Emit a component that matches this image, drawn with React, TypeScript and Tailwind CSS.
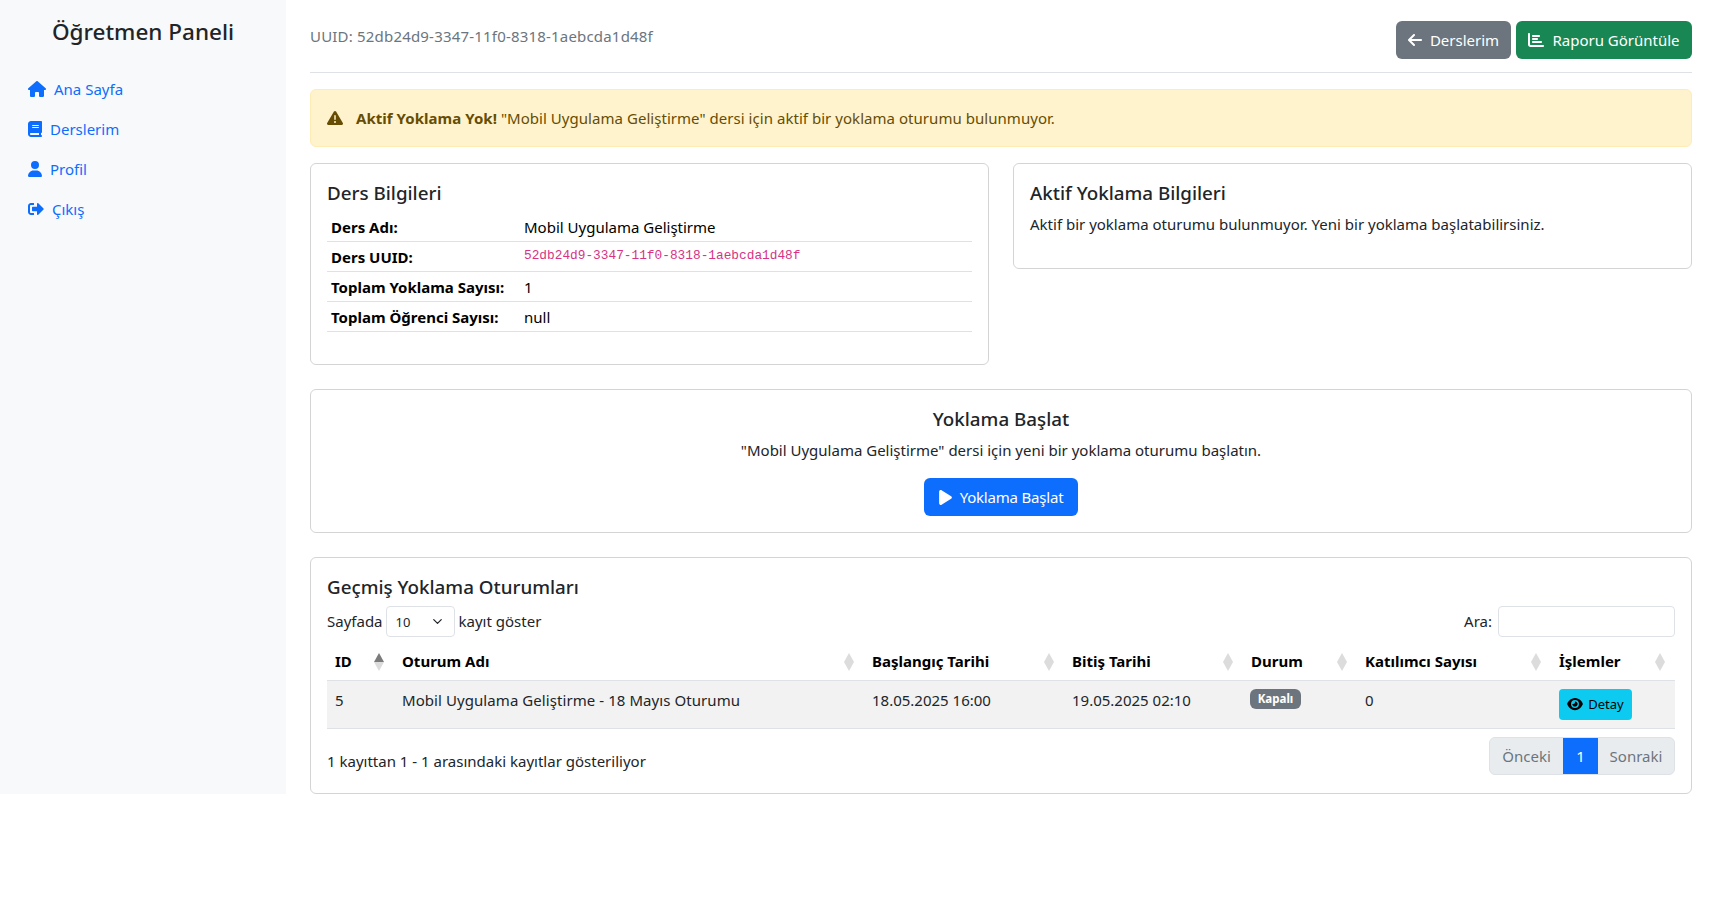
import { FaArrowLeft, FaBook, FaChartBar, FaEye, FaHouse, FaPlay, FaUser, FaTriangleExclamation } from "react-icons/fa6";
import { FaSignOutAlt } from "react-icons/fa";
import { ChevronDown } from "lucide-react";

const navItems = [
  { label: "Ana Sayfa", icon: FaHouse, cls: "h-4 w-[18px]" },
  { label: "Derslerim", icon: FaBook, cls: "h-4 w-[14px]" },
  { label: "Profil", icon: FaUser, cls: "h-4 w-[14px]" },
  { label: "Çıkış", icon: FaSignOutAlt, cls: "h-4 w-4" },
];

const infoRows = [
  { label: "Ders Adı:", value: "Mobil Uygulama Geliştirme" },
  { label: "Ders UUID:", value: "52db24d9-3347-11f0-8318-1aebcda1d48f", code: true },
  { label: "Toplam Yoklama Sayısı:", value: "1" },
  { label: "Toplam Öğrenci Sayısı:", value: "null" },
];

const columns = [
  { label: "ID", width: "w-[67px]", active: true },
  { label: "Oturum Adı", width: "w-[470px]" },
  { label: "Başlangıç Tarihi", width: "w-[200px]" },
  { label: "Bitiş Tarihi", width: "w-[179px]" },
  { label: "Durum", width: "w-[114px]" },
  { label: "Katılımcı Sayısı", width: "w-[194px]" },
  { label: "İşlemler", width: "w-[124px]" },
];

function SortIcon({ active }: { active?: boolean }) {
  return (
    <svg className="absolute right-[10px] top-[10px]" width="10" height="18" viewBox="0 0 10 18">
      <path d="M5 0 L10 9 L0 9 Z" fill={active ? "#7b7b7b" : "#dcdcdc"} />
      <path d="M5 18 L10 9 L0 9 Z" fill="#dcdcdc" />
    </svg>
  );
}

export default function App() {
  return (
    <div className="flex min-h-[916px] items-start bg-white font-['Noto_Sans',sans-serif] text-[15px] leading-6 text-[#212529]">
      <aside className="h-[794px] w-[286px] shrink-0 bg-[#f8f9fa] pt-4">
        <h4 className="mb-[22px] text-center text-[22.5px] leading-[31px] font-medium">Öğretmen Paneli</h4>
        <nav className="flex flex-col px-[28px]">
          {navItems.map(item => (
            <a key={item.label} className="flex h-10 items-center gap-2 text-[#0d6efd]">
              <item.icon className={item.cls} />
              {item.label}
            </a>
          ))}
        </nav>
      </aside>

      <main className="min-w-0 flex-1 px-6">
        <div className="mb-4 flex h-[73px] items-start justify-between border-b border-[#dee2e6] pt-[21px]">
          <span className="mt-[3px] tracking-[0.19px] text-[#6c757d]">UUID: 52db24d9-3347-11f0-8318-1aebcda1d48f</span>
          <div className="flex gap-[5px]">
            <button className="flex h-[38px] w-[115px] items-center justify-center gap-2 rounded-md bg-[#6c757d] text-white">
              <FaArrowLeft className="h-4 w-[14px]" />
              Derslerim
            </button>
            <button className="flex h-[38px] w-[176px] items-center justify-center gap-2 rounded-md bg-[#198754] text-white">
              <FaChartBar className="h-4 w-4" />
              Raporu Görüntüle
            </button>
          </div>
        </div>

        <div className="mb-4 flex h-[58px] items-center gap-[13px] rounded-md border border-[#ffecb5] bg-[#fff3cd] px-4 text-[#664d03]">
          <FaTriangleExclamation className="h-4 w-4" />
          <p className="tracking-[0.04px]">
            <strong className="font-bold">Aktif Yoklama Yok!</strong> "Mobil Uygulama Geliştirme" dersi için aktif bir yoklama oturumu bulunmuyor.
          </p>
        </div>

        <div className="mb-6 grid grid-cols-2 items-start gap-6">
          <section className="h-[202px] rounded-md border border-[#d4d4d4] p-4">
            <h5 className="mb-[5px] text-[18.8px] leading-[26px] font-medium">Ders Bilgileri</h5>
            <table className="w-full text-[#000]">
              <tbody>
                {infoRows.map(row => (
                  <tr key={row.label} className="h-[30px] border-b border-[#dee2e6]">
                    <th className="w-[193px] px-1 pt-[2px] text-left font-bold">{row.label}</th>
                    <td className="px-1 pt-[2px]">
                      {row.code ? (
                        <code className="relative -top-[3px] font-['Liberation_Mono',monospace] text-[12.8px] text-[#d63384]">{row.value}</code>
                      ) : (
                        row.value
                      )}
                    </td>
                  </tr>
                ))}
              </tbody>
            </table>
          </section>

          <section className="h-[106px] rounded-md border border-[#d4d4d4] p-4">
            <h5 className="mb-[6px] text-[18.8px] leading-[26px] font-medium">Aktif Yoklama Bilgileri</h5>
            <p>Aktif bir yoklama oturumu bulunmuyor. Yeni bir yoklama başlatabilirsiniz.</p>
          </section>
        </div>

        <section className="mb-6 flex h-[144px] flex-col items-center rounded-md border border-[#d4d4d4] p-4 text-center">
          <h5 className="mb-[6px] text-[18.8px] leading-[26px] font-medium">Yoklama Başlat</h5>
          <p className="mb-4">"Mobil Uygulama Geliştirme" dersi için yeni bir yoklama oturumu başlatın.</p>
          <button className="flex h-[38px] w-[154px] items-center justify-center gap-2 rounded-md bg-[#0d6efd] tracking-[-0.2px] text-white">
            <FaPlay className="h-[17px] w-[13px]" />
            Yoklama Başlat
          </button>
        </section>

        <section className="h-[237px] rounded-md border border-[#d4d4d4] p-4">
          <h5 className="mb-[6px] text-[18.8px] leading-[26px] font-medium">Geçmiş Yoklama Oturumları</h5>
          <div className="flex h-[31px] items-center justify-between">
            <div className="flex items-center gap-[4px]">
              <span className="-mt-[1px]">Sayfada</span>
              <span className="-ml-[1px] flex h-[31px] w-[69px] items-center justify-between rounded border border-[#dee2e6] pr-[9px] pl-[9px] text-[13px]">
                10
                <ChevronDown size={15} />
              </span>
              <span className="-mt-[1px]">kayıt göster</span>
            </div>
            <div className="flex items-center gap-[6px]">
              <span className="-mt-[1px]">Ara:</span>
              <span className="h-[31px] w-[177px] rounded border border-[#dee2e6]" />
            </div>
          </div>

          <table className="mt-[6px] w-full table-fixed">
            <thead>
              <tr className="h-[37px] border-b border-[#dee2e6] text-[#000]">
                {columns.map(col => (
                  <th key={col.label} className={`relative px-2 text-left font-bold ${col.width}`}>
                    {col.label}
                    <SortIcon active={col.active} />
                  </th>
                ))}
              </tr>
            </thead>
            <tbody>
              <tr className="h-[48px] border-b border-[#dee2e6] bg-[#f2f2f2] align-top">
                <td className="px-2 pt-[7px]">5</td>
                <td className="px-2 pt-[7px] tracking-[0.07px]">Mobil Uygulama Geliştirme - 18 Mayıs Oturumu</td>
                <td className="px-2 pt-[7px]">18.05.2025 16:00</td>
                <td className="px-2 pt-[7px]">19.05.2025 02:10</td>
                <td className="px-2 pt-[8px]">
                  <span className="-ml-[1px] flex h-5 w-[51px] items-center justify-center rounded-md bg-[#6c757d] text-[11.5px] font-bold text-white">Kapalı</span>
                </td>
                <td className="px-2 pt-[7px]">0</td>
                <td className="px-2 pt-[8px]">
                  <button className="flex h-[31px] w-[73px] items-center justify-center gap-[5px] rounded bg-[#0dcaf0] text-[13px] text-black">
                    <FaEye className="h-[14px] w-4" />
                    Detay
                  </button>
                </td>
              </tr>
            </tbody>
          </table>

          <div className="mt-2 flex items-start justify-between">
            <span className="mt-[12px]">1 kayıttan 1 - 1 arasındaki kayıtlar gösteriliyor</span>
            <div className="flex h-[38px] overflow-hidden rounded-md border border-[#dee2e6] bg-[#e9ecef] text-[#6c757d]">
              <span className="flex w-[73px] items-center justify-center">Önceki</span>
              <span className="flex w-[35px] items-center justify-center bg-[#0d6efd] text-white">1</span>
              <span className="flex w-[76px] items-center justify-center">Sonraki</span>
            </div>
          </div>
        </section>
      </main>
    </div>
  );
}
